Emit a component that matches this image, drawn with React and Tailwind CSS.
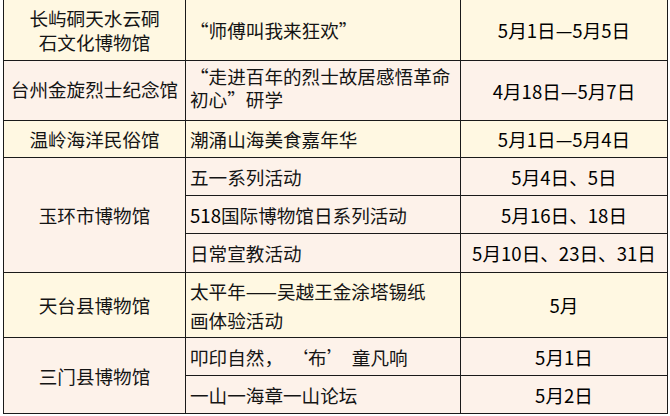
const CREAM = 'bg-[#fff8e2]';
const PINK = 'bg-[#fdf2ea]';

const cell = 'border border-[#1a1a1a] p-0';

export default function App() {
    return (
        <div
            className="w-[670px] h-[416px] overflow-hidden bg-white text-[#141414]"
            style={{ fontFamily: '"Noto Sans CJK SC", "Noto Sans", sans-serif' }}
        >
            <table className="table-fixed border-collapse ml-[3px] -mt-px w-[664px] text-[18.6px] leading-[24px]">
                <colgroup>
                    <col className="w-[182px]" />
                    <col className="w-[275px]" />
                    <col className="w-[207px]" />
                </colgroup>
                <tbody>
                    {/* 长屿硐 */}
                    <tr className={`h-[61px] ${CREAM}`}>
                        <td className={`${cell} text-center align-middle`}>
                            长屿硐天水云硐<br />石文化博物馆
                        </td>
                        <td className={`${cell} pl-[4px] align-middle`}>“师傅叫我来狂欢”</td>
                        <td className={`${cell} text-center align-middle text-[#000]`}>5月1日—5月5日</td>
                    </tr>

                    {/* 台州 */}
                    <tr className={`h-[60px] ${PINK}`}>
                        <td className={`${cell} text-center align-middle pb-[4px]`}>台州金旋烈士纪念馆</td>
                        <td className={`${cell} pl-[4px] pb-[8px] align-middle leading-[23px]`}>
                            “走进百年的烈士故居感悟革命<br />初心”研学
                        </td>
                        <td className={`${cell} text-center align-middle text-[#000]`}>4月18日—5月7日</td>
                    </tr>

                    {/* 温岭 */}
                    <tr className={`h-[37px] ${CREAM}`}>
                        <td className={`${cell} text-center align-middle`}>温岭海洋民俗馆</td>
                        <td className={`${cell} pl-[4px] align-middle`}>潮涌山海美食嘉年华</td>
                        <td className={`${cell} text-center align-middle text-[#000]`}>5月1日—5月4日</td>
                    </tr>

                    {/* 玉环 */}
                    <tr className={`h-[38px] ${PINK}`}>
                        <td rowSpan={3} className={`${cell} text-center align-middle`}>玉环市博物馆</td>
                        <td className={`${cell} pl-[4px] align-middle`}>五一系列活动</td>
                        <td className={`${cell} text-center align-middle text-[#000]`}>5月4日、5日</td>
                    </tr>
                    <tr className={`h-[38px] ${PINK}`}>
                        <td className={`${cell} pl-[4px] align-middle`}>
                            <span className="text-[#000]">518</span>国际博物馆日系列活动
                        </td>
                        <td className={`${cell} text-center align-middle text-[#000]`}>5月16日、18日</td>
                    </tr>
                    <tr className={`h-[39px] ${PINK}`}>
                        <td className={`${cell} pl-[4px] align-middle`}>日常宣教活动</td>
                        <td className={`${cell} text-center align-middle text-[#000]`}>5月10日、23日、31日</td>
                    </tr>

                    {/* 天台 */}
                    <tr className={`h-[65px] ${CREAM}`}>
                        <td className={`${cell} text-center align-middle`}>天台县博物馆</td>
                        <td className={`${cell} pl-[4px] align-middle leading-[29px]`}>
                            太平年——吴越王金涂塔锡纸<br />画体验活动
                        </td>
                        <td className={`${cell} text-center align-middle text-[#000]`}>5月</td>
                    </tr>

                    {/* 三门 */}
                    <tr className={`h-[38px] ${PINK}`}>
                        <td rowSpan={2} className={`${cell} text-center align-middle`}>三门县博物馆</td>
                        <td className={`${cell} pl-[4px] align-middle`}>
                            叩印自然，<span className="inline-block w-[1.35em] text-right">‘</span>布<span className="inline-block w-[1.35em] text-left">’</span>童凡响
                        </td>
                        <td className={`${cell} text-center align-middle text-[#000]`}>5月1日</td>
                    </tr>
                    <tr className={`h-[38px] ${PINK}`}>
                        <td className={`${cell} pl-[4px] align-middle`}>一山一海章一山论坛</td>
                        <td className={`${cell} text-center align-middle text-[#000]`}>5月2日</td>
                    </tr>
                </tbody>
            </table>
        </div>
    );
}
